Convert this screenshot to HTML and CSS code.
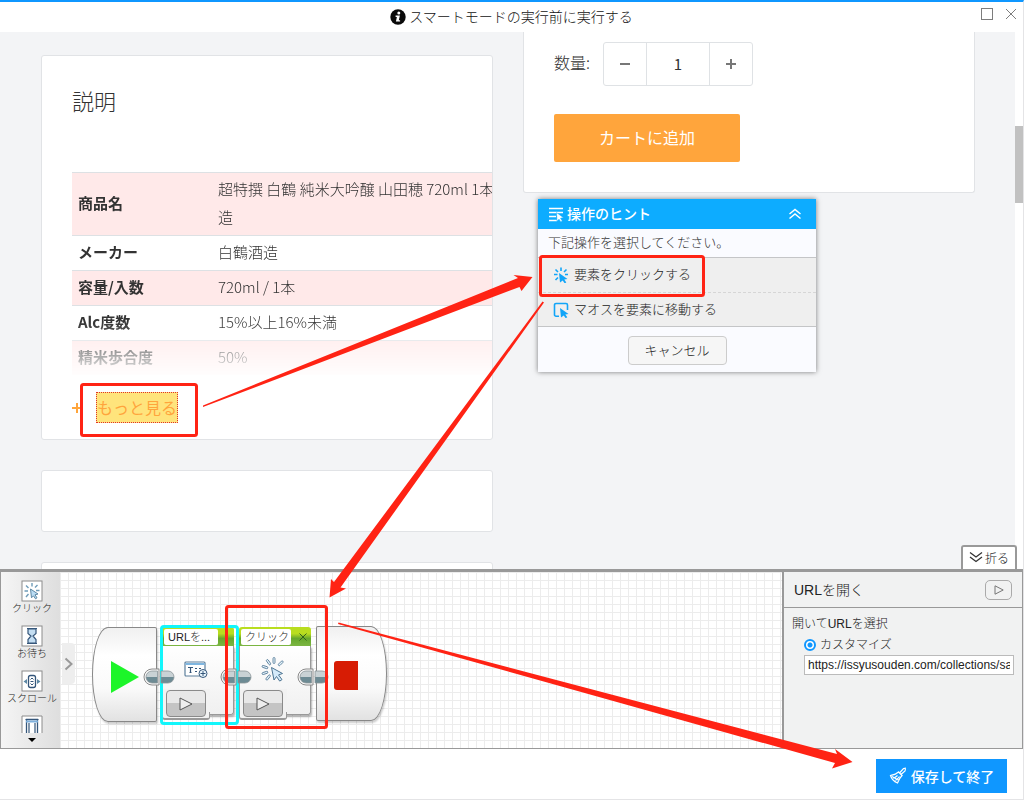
FILE: index.html
```html
<!DOCTYPE html>
<html lang="ja">
<head>
<meta charset="utf-8">
<meta name="viewport" content="width=device-width, initial-scale=1">
<title>スマートモードの実行前に実行する</title>
<link rel="stylesheet" href="styles.css">
</head>
<body>
<div class="app">
  <header class="titlebar">
    <h1 class="title">
      <svg class="info" viewBox="0 0 16 16"><circle cx="8" cy="8" r="7.7" fill="#0a0a0a"/><g fill="#fff"><circle cx="8.8" cy="4.1" r="1.5"/><path d="M5.6 6.600h4.300L8.800 11.200h1.300v1.300H5.900l1-4.600H5.600z"/></g></svg>
      <span>スマートモードの実行前に実行する</span>
    </h1>
    <div class="window-controls">
      <button type="button" aria-label="最大化"><svg viewBox="0 0 14 14"><rect x="1.500" y="1.500" width="11" height="11"/></svg></button>
      <button type="button" aria-label="閉じる"><svg viewBox="0 0 14 14"><path d="M2 2l10 10M12 2L2 12"/></svg></button>
    </div>
  </header>

  <main class="viewer">
    <div class="page">
      <div class="column">
        <section class="card description">
          <h2>説明</h2>
          <div class="spec-fade">
            <table class="spec">
              <tbody>
                <tr><th scope="row">商品名</th><td>超特撰 白鶴 純米大吟醸 山田穂 720ml 1本<br>造</td></tr>
                <tr><th scope="row">メーカー</th><td>白鶴酒造</td></tr>
                <tr><th scope="row">容量/入数</th><td>720ml / 1本</td></tr>
                <tr><th scope="row">Alc度数</th><td>15%以上16%未満</td></tr>
                <tr><th scope="row">精米歩合度</th><td>50%</td></tr>
              </tbody>
            </table>
          </div>
          <div class="more"><svg class="plus" viewBox="0 0 10 10"><path d="M5 0v10M0 5h10"/></svg><a href="#">もっと見る</a></div>
        </section>
        <section class="card empty"></section>
        <section class="card empty"></section>
      </div>
      <div class="column">
        <section class="card purchase">
          <div class="quantity">
            <label for="qty">数量:</label>
            <div class="stepper">
              <button type="button" aria-label="減らす"><svg viewBox="0 0 12 12"><path d="M1 6h10"/></svg></button>
              <input id="qty" type="text" value="1">
              <button type="button" aria-label="増やす"><svg viewBox="0 0 12 12"><path d="M1 6h10M6 1v10"/></svg></button>
            </div>
          </div>
          <button type="button" class="add-cart">カートに追加</button>
        </section>
      </div>
    </div>
    <div class="scrollbar"><div class="thumb"></div></div>

    <aside class="hint">
      <div class="hint-head">
        <svg class="hint-icon" viewBox="0 0 16 16"><path d="M1 2.500h14M1 6.500h14M1 10.500h7M1 14.500h8" stroke="#fff" stroke-width="1.500"/><path d="M8.500 6.500l7 5.200-3 .5 1.800 2.800-1.500 1-1.800-2.800-2 2z" fill="#fff" stroke="#0dacff" stroke-width=".5"/></svg>
        <strong>操作のヒント</strong>
        <button type="button" class="fold" aria-label="閉じる"><svg viewBox="0 0 14 12"><path d="M1.500 6L7 1.500 12.500 6M1.500 10.500L7 6l5.500 4.500"/></svg></button>
      </div>
      <p>下記操作を選択してください。</p>
      <div class="hint-list">
        <button type="button"><svg viewBox="0 0 16 16"><path d="M1 7.500h3.500M2.500 2.500l2.500 2.500M8 .5V4M13.500 2.500L11 5M12 7.500h3M2.500 13L5 10.500" stroke="#12a5f8" stroke-width="1.600"/><path d="M6 6l8.500 6-3.200.4 2 3-1.600 1-2-3L7 15.500z" fill="#12a5f8"/></svg><span>要素をクリックする</span></button>
        <button type="button"><svg viewBox="0 0 16 16"><path d="M6 14.200H3A1.500 1.500 0 0 1 1.500 12.700V3A1.500 1.500 0 0 1 3 1.500h10A1.500 1.500 0 0 1 14.500 3v5" stroke="#12a5f8" stroke-width="1.600" fill="none"/><path d="M7 6l8.500 6-3.200.4 2 2.800-1.600 1-2-2.800L8 15.500z" fill="#12a5f8"/></svg><span>マオスを要素に移動する</span></button>
      </div>
      <div class="hint-foot"><button type="button">キャンセル</button></div>
    </aside>
    <button type="button" class="collapse"><svg viewBox="0 0 14 12"><path d="M1 1.500L7 6l6-4.500M1 6l6 4.500L13 6"/></svg><span>折る</span></button>
  </main>

  <section class="workspace">
    <nav class="tools">
      <button type="button"><svg viewBox="0 0 22 22"><rect class="frame" x="1" y="1" width="20" height="20"/><g stroke="#6f9cb8" stroke-width="1.400"><path d="M3.500 11H7M5 5.500l2.500 2.500M11 3v3.500M16.500 5L14 7.500M15 10.500h3.500M5 17l2.500-3"/></g><path d="M9.500 9l7.500 5-3 .8 2 3-1.500 1-2-3-2 2z" fill="#b9dcf4" stroke="#5d88a4"/></svg><span>クリック</span></button>
      <button type="button"><svg viewBox="0 0 22 22"><rect class="frame" x="1" y="1" width="20" height="20"/><path d="M6 3.500h10M6 18.500h10M7 4v4.500L10 11l-3 3.500V18h8v-3.500L12 11l3-2.500V4z" stroke="#35567a" stroke-width="1.200" fill="#c4def2"/></svg><span>お待ち</span></button>
      <button type="button"><svg viewBox="0 0 22 22"><rect class="frame" x="1" y="1" width="20" height="20"/><rect x="7.500" y="5.500" width="7" height="12" rx="2" fill="#fff" stroke="#35567a" stroke-width="1.300"/><path d="M9.500 9.500L11 8l1.500 1.500M9.500 13.500L11 15l1.500-1.500M9.500 11.500h3" fill="none" stroke="#35567a"/><path d="M2.500 11.500L6 9v5zM19.500 11.500L16 9v5z" fill="#5d88a4"/></svg><span>スクロール</span></button>
      <button type="button" class="cut" aria-label="次のツール"><svg viewBox="0 0 22 18"><path class="frame" d="M1 18V1h20v17"/><path d="M5.500 18V4.500h11V18" fill="#fff" stroke="#35567a" stroke-width="1.300"/><path d="M4.500 4.500h13M8 8v10M14 8v10" stroke="#35567a" stroke-width="1.200"/><path d="M5 6.500h12" stroke="#7fb0dc" stroke-width="2"/></svg></button>
      <button type="button" class="down" aria-label="下へ"><svg viewBox="0 0 8 5"><path d="M0 1h8L4 5z" fill="#000"/></svg></button>
    </nav>

    <div class="canvas">
      <button type="button" class="expander" aria-label="展開"><svg viewBox="0 0 10 14"><path d="M1.500 1.500L7.500 7l-6 5.500"/></svg></button>

      <div class="cap cap-start"><svg viewBox="0 0 28 32"><path d="M0 0v32L28 16z" fill="#1cf529"/></svg></div>

      <div class="node node-open selected">
        <div class="node-head"><span>URLを...</span></div>
        <div class="node-body">
          <svg viewBox="0 0 24 18"><rect x="1" y="1" width="20" height="14" rx="1" fill="#fff" stroke="#5c7f9c" stroke-width="1.200"/><path d="M1.500 3h19" stroke="#7fb6e0" stroke-width="2"/><path d="M4 6.500h5M6.500 6.500v5M5.500 11.500h2M11 7.500h2M15 7.500h2M11 10.500h2" stroke="#35567a" stroke-width="1.200"/><circle cx="19" cy="12.500" r="4" fill="#eaf5fc" stroke="#35567a"/><path d="M16.500 12.500h5M19 10v5" stroke="#35567a"/></svg>
        </div>
        <div class="node-foot"><button type="button" aria-label="実行"><svg viewBox="0 0 14 14"><path d="M1 1v12l12-6z"/></svg></button></div>
      </div>

      <div class="node node-click">
        <div class="node-head"><span>クリック</span><svg class="x" viewBox="0 0 8 8"><path d="M.5.5l7 7M7.500.5l-7 7"/></svg></div>
        <div class="node-body">
          <svg viewBox="0 0 26 26"><g fill="#e6f3fb" stroke="#4d7593" stroke-width=".8"><rect x="13" y=".5" width="2" height="6" rx="1"/><rect x="13" y=".5" width="2" height="6" rx="1" transform="rotate(-35 14 13)"/><rect x="13" y=".5" width="2" height="6" rx="1" transform="rotate(-72 14 13)"/><rect x="13" y=".5" width="2" height="6" rx="1" transform="rotate(-108 14 13)"/><rect x="13" y=".5" width="2" height="6" rx="1" transform="rotate(-142 14 13)"/><rect x="13" y=".5" width="2" height="6" rx="1" transform="rotate(45 14 13)"/></g><path d="M11.500 10.500l11 6-4 1.400 3.500 4.700-2.300 1.500-3.200-4.600-2.500 3.500z" fill="#d4eafa" stroke="#4d7593"/></svg>
        </div>
        <div class="node-foot"><button type="button" aria-label="実行"><svg viewBox="0 0 14 14"><path d="M1 1v12l12-6z"/></svg></button></div>
      </div>

      <div class="cap cap-stop"><span></span></div>

      <svg class="link link-1" viewBox="0 0 32 18"><use href="#plug"/></svg>
      <svg class="link link-2" viewBox="0 0 32 18"><use href="#plug"/></svg>
      <svg class="link link-3" viewBox="0 0 32 18">
        <defs><g id="plug"><path d="M16 1H9a8 8 0 0 0 0 16h7z" fill="#fafafa" stroke="#8a8a8a"/><path d="M14.500 3H9A6 6 0 0 0 3 9h11.500z" fill="#c9d2d5"/><path d="M3 9a6 6 0 0 0 6 6h5.500V9z" fill="#6d8b94"/><path d="M18 3h7a6 6 0 0 1 6 6H18z" fill="#c9d2d5"/><path d="M31 9a6 6 0 0 1-6 6h-7V9z" fill="#6d8b94"/><path d="M18 3h7a6 6 0 0 1 0 12h-7zM14.500 3H9a6 6 0 0 0 0 12h5.500z" fill="none" stroke="#8a9498" stroke-width=".8"/></g></defs>
        <use href="#plug"/></svg>
    </div>

    <aside class="props">
      <div class="props-head"><h2>URLを開く</h2><button type="button" aria-label="実行"><svg viewBox="0 0 10 10"><path d="M1 .8v8.400L9.200 5z"/></svg></button></div>
      <div class="props-body">
        <p>開いてURLを選択</p>
        <label class="choice"><input type="radio" name="source" checked>カスタマイズ</label>
        <input class="url" type="text" aria-label="URL" value="https://issyusouden.com/collections/sake">
      </div>
    </aside>
  </section>

  <footer class="actions">
    <button type="button" class="save"><svg viewBox="0 0 18 18"><g fill="none" stroke="#fff" stroke-width="1.200"><path d="M9 4.500l4.500 4.500M10.500 6l4-4.500L17 1M12 7.500L16 4l.5-2.500M9.500 5C7 7.500 4 8 1.500 8.500c1 3.500 3.500 6 7 7.500 1-2.500 2-5 4.500-7.500M4 11c1.500 0 3-1 4.500-2.500M6.500 13.500c1.500-1 2.500-2 4-4M3 9.500l7 4"/></g></svg><span>保存して終了</span></button>
  </footer>

  <svg class="marks" viewBox="0 0 1024 800" width="1024" height="800" aria-hidden="true">
    <g fill="none" stroke="#ff2314" stroke-width="3">
      <rect x="81.500" y="384.500" width="115" height="51" rx="2"/>
      <rect x="540.500" y="256.500" width="163" height="39" rx="2"/>
      <rect x="226.500" y="606.500" width="100" height="121" rx="2"/>
    </g>
    <g fill="#ff2314">
      <path d="M203 405.500L518 278 513.500 275 532.500 277 521.500 291 519.500 287 203 407z"/>
      <path d="M542.500 301.500L334 582 331 579 329.500 597.500 346 588.500 340.500 587.500 544 302.500z"/>
      <path d="M338.500 622.500L837 754 835 749 852.500 762 832 768.500 835 763 338 624z"/>
    </g>
  </svg>
</div>
</body>
</html>
```
FILE: styles.css
```css
* { box-sizing: border-box; }
body { margin: 0; font-family: "Liberation Sans", "Noto Sans CJK JP", sans-serif; font-weight: 300; color: #222; }
button, input { font: inherit; color: inherit; margin: 0; }
button { padding: 0; border: 0; background: none; cursor: pointer; }
h1, h2, p { margin: 0; font-weight: 300; }
svg { display: block; flex: none; }

.app { position: relative; display: flex; flex-direction: column; min-height: 100vh; border-top: 2px solid #0f97ff; border-right: 1px solid #e4e4e6; border-bottom: 1px solid #e4e4e6; background: #fff; overflow: hidden; }

.titlebar { position: relative; display: flex; justify-content: center; align-items: center; height: 30px; }
.title { display: flex; align-items: center; gap: 3px; font-size: 14px; line-height: 20px; color: #111; }
.info { width: 16px; height: 16px; }
.window-controls { position: absolute; right: 5px; top: 5px; display: flex; gap: 10px; }
.window-controls svg { width: 14px; height: 14px; fill: none; stroke: #7d7d7d; }

.viewer { position: relative; flex: 1 1 0; display: flex; overflow: hidden; background: #f3f4f6; }
.page { flex: 1; display: grid; grid-template-columns: 1fr 1fr; gap: 30px; height: 0; padding: 0 40px 0 41px; font-family: "Noto Sans CJK JP", sans-serif; color: #333; }
.column { display: flex; flex-direction: column; gap: 30px; min-width: 0; }
.card { background: #fff; border: 1px solid #e1e3e6; border-radius: 3px; }
.description { margin-top: 23px; padding: 28px 0 16px 30px; overflow: hidden; }
.description h2 { font-size: 22px; line-height: 32px; }
.spec-fade { margin-top: 56px; height: 208px; overflow: hidden; -webkit-mask-image: linear-gradient(#000 150px, transparent 208px); mask-image: linear-gradient(#000 150px, transparent 208px); }
.spec { width: 600px; table-layout: fixed; border-collapse: collapse; font-size: 15px; line-height: 28px; }
.spec tr { border-top: 1px solid #dde1e4; }
.spec tr:nth-child(odd) { background: #ffe9e9; }
.spec th, .spec td { padding: 2px 6px 4px; text-align: left; white-space: nowrap; }
.spec th { width: 140px; font-weight: 700; }
.more { display: flex; align-items: center; gap: 14px; margin-top: 12px; }
.plus { width: 10px; height: 10px; stroke: #ffa53c; stroke-width: 2; }
.more a { border: 1px dotted #e0322c; background: #ffe47c; color: #ffa53c; font-size: 16px; font-weight: 400; line-height: 29px; text-decoration: none; }
.empty { flex: none; height: 62px; }

.purchase { padding: 10px 30px 30px; border-top: 0; border-radius: 0 0 3px 3px; }
.quantity { display: flex; align-items: center; gap: 13px; font-size: 16px; }
.quantity label { padding-bottom: 4px; }
.stepper { display: flex; height: 44px; border: 1px solid #dfe2e5; border-radius: 3px; }
.stepper button { display: flex; width: 42px; align-items: center; justify-content: center; }
.stepper svg { width: 12px; height: 12px; stroke: #777; stroke-width: 2; }
.stepper input { width: 64px; padding: 0 0 2px; border: solid #dfe2e5; border-width: 0 1px; text-align: center; font-size: 15px; font-weight: 400; background: none; border-radius: 0; }
.add-cart { display: block; width: 186px; height: 48px; margin-top: 28px; padding-bottom: 3px; border-radius: 2px; background: #ffa53c; color: #fff; font-size: 16px; font-weight: 400; }

.scrollbar { width: 8px; background: #fff; }
.thumb { height: 77px; margin-top: 94px; background: #c1c1c1; }

.hint { position: absolute; left: 538px; top: 167px; width: 278px; background: #fafbff; box-shadow: 0 0 5px rgba(0, 0, 0, .5); font-size: 13px; line-height: 20px; }
.hint-head { display: flex; align-items: center; gap: 3px; height: 30px; padding: 0 14px 0 10px; background: #0dacff; color: #fff; font-size: 14px; }
.hint-icon { width: 16px; height: 16px; }
.hint-head strong { flex: 1; font-weight: 500; }
.fold svg { width: 14px; height: 12px; fill: none; stroke: #fff; stroke-width: 1.5; }
.hint p { padding: 4px 10px; color: #333; }
.hint-list { border: solid #c4c5c7; border-width: 1px 0; background: #efefef; }
.hint-list button { display: flex; align-items: center; gap: 5px; width: 100%; height: 34px; padding-left: 15px; }
.hint-list button + button { border-top: 1px dashed #d6d6d6; }
.hint-list svg { width: 16px; height: 16px; }
.hint-foot { display: flex; justify-content: center; padding: 9px 8px 7px; }
.hint-foot button { width: 99px; height: 29px; border: 1px solid #ccc; border-radius: 4px; background: #f6f6f6; }

.collapse { position: absolute; right: 6px; bottom: 0; display: flex; align-items: center; gap: 2px; height: 24px; padding: 0 6px 2px; border: 2px solid #999; border-bottom: 0; border-radius: 3px 3px 0 0; background: #fff; font-size: 12px; }
.collapse svg { width: 14px; height: 12px; fill: none; stroke: #333; stroke-width: 1.3; }

.workspace { display: flex; height: 180px; border: 1px solid #999; border-top: 3px solid #999; }
.tools { display: flex; flex-direction: column; align-items: center; gap: 9px; width: 59px; padding: 8px 0 0 3px; background: linear-gradient(to right, #f5f5f5, #dedede); font-size: 10px; line-height: 14px; white-space: nowrap; }
.tools button { display: flex; flex-direction: column; align-items: center; }
.tools svg { width: 22px; height: 22px; }
.tools .frame { fill: #fff; stroke: #8c8c8c; }
.tools .cut svg { height: 18px; }
.tools .down { margin-top: -5px; }
.tools .down svg { width: 8px; height: 5px; }

.canvas { position: relative; flex: 1; min-width: 0; overflow: hidden; background: linear-gradient(to right, #ececec 1px, transparent 1px) 0 0 / 8px 8px, linear-gradient(#ececec 1px, transparent 1px) 0 0 / 8px 8px, #fff; }
.expander { position: absolute; left: 2px; top: 71px; width: 13px; height: 41px; border-radius: 0 4px 4px 0; background: #eee; }
.expander svg { width: 10px; height: 14px; margin-left: 2px; fill: none; stroke: #999; stroke-width: 2; }
.cap { position: absolute; display: flex; align-items: center; height: 95px; border: 1px solid #888; background: linear-gradient(#f0f0f0, #fff 30%, #fafafa 65%, #e2e2e2); box-shadow: 1px 2px 2px rgba(0, 0, 0, .2); }
.cap-start { left: 32px; top: 55px; width: 65px; border-radius: 16px 2px 2px 16px / 48px 2px 2px 48px; }
.cap-start svg { width: 28px; height: 32px; margin: 4px 0 0 18px; }
.cap-stop { left: 256px; top: 54px; width: 71px; border-radius: 2px 16px 16px 2px / 2px 48px 48px 2px; }
.cap-stop span { width: 24px; height: 29px; margin: 4px 0 0 17px; border-radius: 3px 0 0 3px; background: #d71c04; }
.node { position: absolute; top: 55px; width: 72px; font-size: 11px; }
.node-open { left: 102px; }
.node-click { left: 179px; }
.node-head { display: flex; align-items: center; justify-content: space-between; height: 19px; padding: 1px 3px 1px 2px; border-radius: 3px 3px 0 0; background: linear-gradient(#b9dd1f 35%, #66a82c 60%, #7cb643); }
.node-head span { width: 54px; height: 16px; padding-left: 4px; border-radius: 2px; background: #fff; line-height: 16px; white-space: nowrap; }
.node-click .node-head span { width: 50px; }
.node-head .x { width: 8px; height: 8px; margin-right: 1px; stroke: #33621c; }
.node-body { display: flex; justify-content: center; align-items: center; height: 69px; padding: 0 4px 20px 0; border: 1px solid #999; border-top: 0; border-radius: 0 0 3px 3px; background: linear-gradient(#fff, #f0f0f0); box-shadow: 1px 2px 2px rgba(0, 0, 0, .3); }
.node-open .node-body svg { width: 24px; height: 18px; }
.node-click .node-body svg { width: 26px; height: 26px; }
.node-foot { position: absolute; left: 0; top: 62px; width: 48px; height: 31px; padding: 1px 3px; border-left: 1px solid #999; border-bottom: 2px solid #999; border-radius: 0 0 3px 3px; background: #f2f2f2; }
.node-foot::after { content: ""; position: absolute; right: 0; bottom: 0; width: 1px; height: 6px; background: #999; }
.node-foot button { display: flex; align-items: center; justify-content: center; width: 40px; height: 27px; border: 1px solid #8a8a8a; border-radius: 4px; background: linear-gradient(#e8e8e8 50%, #c4c4c4 50%); }
.node-foot svg { width: 14px; height: 14px; fill: #eee; stroke: #555; }
.selected::after { content: ""; position: absolute; inset: -2px -5px -10px -2px; border: 3px solid #12f6fb; border-radius: 4px; pointer-events: none; }
.link { position: absolute; top: 96px; width: 32px; height: 18px; }
.link-1 { left: 83px; }
.link-2 { left: 160px; }
.link-3 { left: 237px; }

.props { flex: none; width: 240px; border-left: 2px solid #999; background: #f1f2f2; font-size: 12px; line-height: 18px; overflow: hidden; }
.props-head { display: flex; align-items: center; justify-content: space-between; height: 36px; padding: 0 10px; border-bottom: 1px solid #999; }
.props-head h2 { font-size: 14px; }
.props-head button { display: flex; align-items: center; justify-content: center; width: 27px; height: 20px; border: 1px solid #aaa; border-radius: 5px; }
.props-head svg { width: 10px; height: 10px; fill: none; stroke: #777; }
.props-body { padding: 7px 8px; }
.choice { display: flex; align-items: center; gap: 4px; margin: 3px 0 1px 12px; }
.choice input { appearance: none; width: 12px; height: 12px; border: 2px solid #0f97ff; border-radius: 50%; background: radial-gradient(circle, #0f97ff 2px, #fff 3px); }
.url { display: block; width: calc(100% - 12px); height: 20px; margin-left: 12px; padding: 0 3px; border: 1px solid #bbb; background: #fff; }

.actions { display: flex; justify-content: flex-end; padding: 10px 16px 6px; }
.save { display: flex; align-items: center; justify-content: center; gap: 4px; width: 131px; height: 34px; background: #0f97ff; color: #fff; font-size: 14px; font-weight: 500; }
.save svg { width: 18px; height: 18px; }

.marks { position: absolute; left: 0; top: -2px; pointer-events: none; }
```
